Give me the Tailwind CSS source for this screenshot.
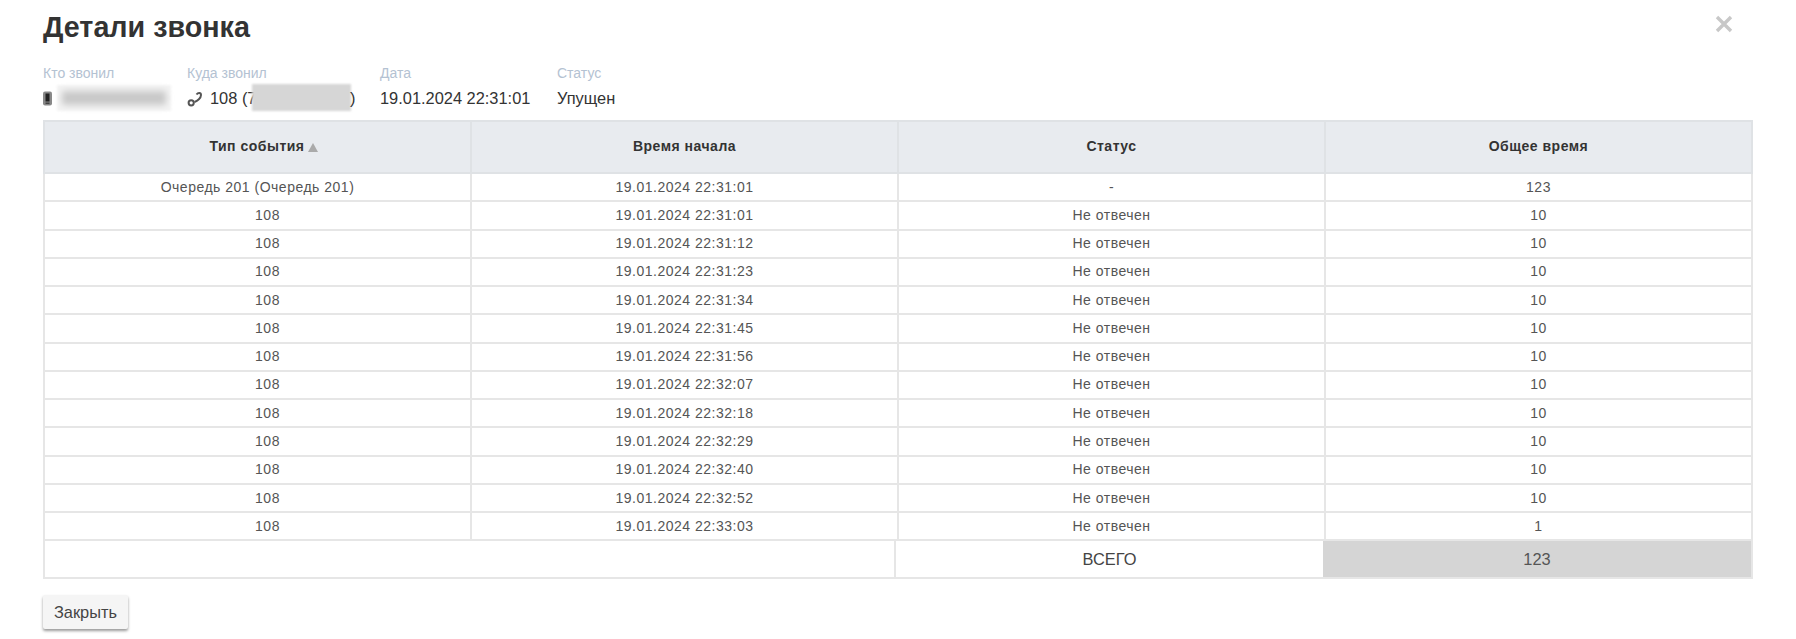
<!DOCTYPE html>
<html lang="ru">
<head>
    <meta charset="UTF-8">
    <title>Детали звонка</title>
    <script src="https://cdn.jsdelivr.net/npm/@tailwindcss/browser@4"></script>
</head>
<body class="bg-white font-['Liberation_Sans',sans-serif] text-[#333] overflow-hidden">
<div class="relative h-[639px] pl-[43px] pr-[43px]">

    <!-- Close -->
    <span class="absolute left-[1714px] top-[14px] text-[#c8c8c8]">
        <svg width="20" height="20" viewBox="0 0 20 20"><path d="M3 3 L17 17 M17 3 L3 17" stroke="currentColor" stroke-width="3.4"/></svg>
    </span>

    <h3 class="pt-[10px] h-[56px] text-[28.7px] leading-[34px] font-bold text-[#333]">Детали звонка</h3>

    <!-- Call info -->
    <div class="flex h-[64px]">
        <div class="w-[144px]">
            <div class="mt-[9px] text-[14px] leading-[16px] text-[#b4c2d2]">Кто звонил</div>
            <div class="flex items-center mt-[5px] h-[24px]">
                <svg width="9" height="15" viewBox="0 0 9 15" class="shrink-0"><rect x="0" y="0.5" width="9" height="14" rx="2" fill="#888"/><rect x="2.5" y="2.5" width="4" height="8" fill="#222"/><rect x="2.5" y="11.5" width="4" height="1.5" fill="#444"/></svg>
                <div class="relative ml-[5px] w-[114px] h-[26px] bg-[#f4f4f4] blur-[1px]">
                    <div class="absolute inset-x-[5px] inset-y-[6px] bg-[#c8c8c8] blur-[3px]"></div>
                </div>
            </div>
        </div>
        <div class="w-[193px]">
            <div class="mt-[9px] text-[14px] leading-[16px] text-[#b4c2d2]">Куда звонил</div>
            <div class="relative flex items-center mt-[5px] h-[24px] text-[16.4px] text-[#333]">
                <svg width="16" height="16" viewBox="0 0 16 16" class="mr-[7px] mt-[2px] shrink-0" fill="none" stroke="#555" stroke-width="2"><path d="M9.5 3.5 C11 1.5 14 1.5 14 4 C14 7 10.5 10 7.5 11"/><circle cx="4.2" cy="11.8" r="2.6"/></svg>
                <span>108 (7</span>
                <span class="absolute left-[65px] top-[-2px] w-[99px] h-[27px] bg-[#d6d6d6] blur-[1px]"></span>
                <span class="absolute left-[163px]">)</span>
            </div>
        </div>
        <div class="w-[177px]">
            <div class="mt-[9px] text-[14px] leading-[16px] text-[#b4c2d2]">Дата</div>
            <div class="mt-[5px] text-[16.4px] leading-[24px]">19.01.2024 22:31:01</div>
        </div>
        <div>
            <div class="mt-[9px] text-[14px] leading-[16px] text-[#b4c2d2]">Статус</div>
            <div class="mt-[5px] text-[16.4px] leading-[24px]">Упущен</div>
        </div>
    </div>

    <!-- Events table -->
    <table class="w-[1710px] table-fixed border-collapse text-[14px] tracking-[0.5px] text-center text-[#555]">
        <thead class="bg-[#e8ebef] text-[#333]">
            <tr class="h-[52px]">
                <th class="pl-[12px] pb-[2px] border-2 border-[#dfe2e5] font-bold">Тип события<svg width="10" height="9" viewBox="0 0 10 9" class="inline-block ml-[3px] align-[-1px]"><path d="M5 0 L10 9 L0 9 Z" fill="#aaa"/></svg></th>
                <th class="pb-[2px] border-2 border-[#dfe2e5] font-bold">Время начала</th>
                <th class="pb-[2px] border-2 border-[#dfe2e5] font-bold">Статус</th>
                <th class="pb-[2px] border-2 border-[#dfe2e5] font-bold">Общее время</th>
            </tr>
        </thead>
        <tbody>
            <tr class="h-[28.27px]"><td class="border-2 border-[#e6e6e6]">Очередь 201 (Очередь 201)</td><td class="border-2 border-[#e6e6e6]">19.01.2024 22:31:01</td><td class="border-2 border-[#e6e6e6]">-</td><td class="border-2 border-[#e6e6e6]">123</td></tr>
            <tr class="h-[28.27px]"><td class="pl-[20px] border-2 border-[#e6e6e6]">108</td><td class="border-2 border-[#e6e6e6]">19.01.2024 22:31:01</td><td class="border-2 border-[#e6e6e6]">Не отвечен</td><td class="border-2 border-[#e6e6e6]">10</td></tr>
            <tr class="h-[28.27px]"><td class="pl-[20px] border-2 border-[#e6e6e6]">108</td><td class="border-2 border-[#e6e6e6]">19.01.2024 22:31:12</td><td class="border-2 border-[#e6e6e6]">Не отвечен</td><td class="border-2 border-[#e6e6e6]">10</td></tr>
            <tr class="h-[28.27px]"><td class="pl-[20px] border-2 border-[#e6e6e6]">108</td><td class="border-2 border-[#e6e6e6]">19.01.2024 22:31:23</td><td class="border-2 border-[#e6e6e6]">Не отвечен</td><td class="border-2 border-[#e6e6e6]">10</td></tr>
            <tr class="h-[28.27px]"><td class="pl-[20px] border-2 border-[#e6e6e6]">108</td><td class="border-2 border-[#e6e6e6]">19.01.2024 22:31:34</td><td class="border-2 border-[#e6e6e6]">Не отвечен</td><td class="border-2 border-[#e6e6e6]">10</td></tr>
            <tr class="h-[28.27px]"><td class="pl-[20px] border-2 border-[#e6e6e6]">108</td><td class="border-2 border-[#e6e6e6]">19.01.2024 22:31:45</td><td class="border-2 border-[#e6e6e6]">Не отвечен</td><td class="border-2 border-[#e6e6e6]">10</td></tr>
            <tr class="h-[28.27px]"><td class="pl-[20px] border-2 border-[#e6e6e6]">108</td><td class="border-2 border-[#e6e6e6]">19.01.2024 22:31:56</td><td class="border-2 border-[#e6e6e6]">Не отвечен</td><td class="border-2 border-[#e6e6e6]">10</td></tr>
            <tr class="h-[28.27px]"><td class="pl-[20px] border-2 border-[#e6e6e6]">108</td><td class="border-2 border-[#e6e6e6]">19.01.2024 22:32:07</td><td class="border-2 border-[#e6e6e6]">Не отвечен</td><td class="border-2 border-[#e6e6e6]">10</td></tr>
            <tr class="h-[28.27px]"><td class="pl-[20px] border-2 border-[#e6e6e6]">108</td><td class="border-2 border-[#e6e6e6]">19.01.2024 22:32:18</td><td class="border-2 border-[#e6e6e6]">Не отвечен</td><td class="border-2 border-[#e6e6e6]">10</td></tr>
            <tr class="h-[28.27px]"><td class="pl-[20px] border-2 border-[#e6e6e6]">108</td><td class="border-2 border-[#e6e6e6]">19.01.2024 22:32:29</td><td class="border-2 border-[#e6e6e6]">Не отвечен</td><td class="border-2 border-[#e6e6e6]">10</td></tr>
            <tr class="h-[28.27px]"><td class="pl-[20px] border-2 border-[#e6e6e6]">108</td><td class="border-2 border-[#e6e6e6]">19.01.2024 22:32:40</td><td class="border-2 border-[#e6e6e6]">Не отвечен</td><td class="border-2 border-[#e6e6e6]">10</td></tr>
            <tr class="h-[28.27px]"><td class="pl-[20px] border-2 border-[#e6e6e6]">108</td><td class="border-2 border-[#e6e6e6]">19.01.2024 22:32:52</td><td class="border-2 border-[#e6e6e6]">Не отвечен</td><td class="border-2 border-[#e6e6e6]">10</td></tr>
            <tr class="h-[28.27px]"><td class="pl-[20px] border-2 border-[#e6e6e6]">108</td><td class="border-2 border-[#e6e6e6]">19.01.2024 22:33:03</td><td class="border-2 border-[#e6e6e6]">Не отвечен</td><td class="border-2 border-[#e6e6e6]">1</td></tr>
        </tbody>
    </table>

    <!-- Totals -->
    <div class="flex w-[1710px] h-[38px] border-2 border-t-0 border-[#e6e6e6] text-[16.4px] text-[#444]">
        <div class="w-[851px] border-r-2 border-[#e6e6e6]"></div>
        <div class="w-[427px] flex items-center justify-center">ВСЕГО</div>
        <div class="flex-1 flex items-center justify-center bg-[#d5d5d5] text-[#555]">123</div>
    </div>

    <button class="mt-[16px] h-[34px] w-[85px] rounded-[2px] bg-[#f5f5f5] text-[16.4px] text-[#444] shadow-[0_2px_3px_rgba(0,0,0,0.4)]">Закрыть</button>
</div>
</body>
</html>
